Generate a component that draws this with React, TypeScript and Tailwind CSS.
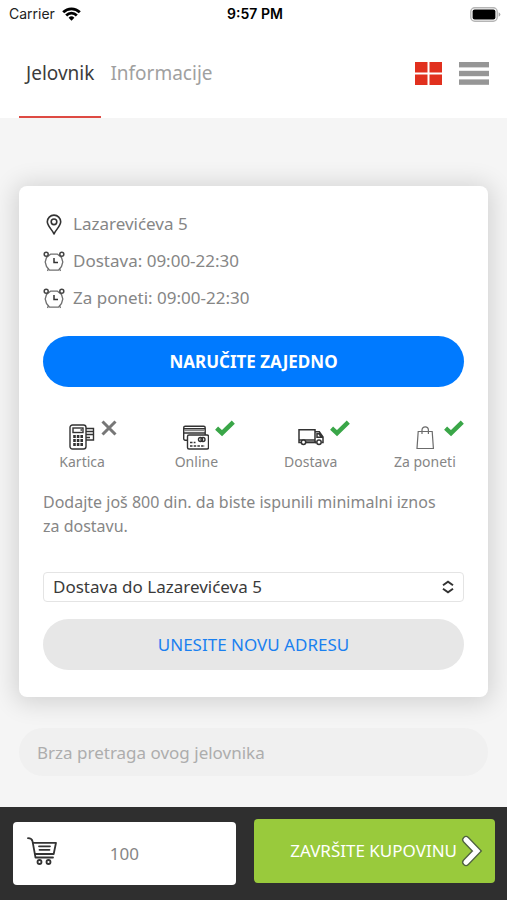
import { useState } from "react";
import type { ReactNode } from "react";

interface Option {
  label: string;
  available: boolean;
  icon: ReactNode;
}

function WifiIcon() {
  return (
    <svg width="19" height="14" viewBox="0 0 19 14" fill="none" stroke="#000" strokeWidth="2.8">
      <path d="M1.2 5.2a11.8 11.8 0 0 1 16.6 0" />
      <path d="M4.2 8.4a7.5 7.5 0 0 1 10.6 0" />
      <path d="M9.5 13.8 6.6 10.8a4.1 4.1 0 0 1 5.8 0z" fill="#000" stroke="none" />
    </svg>
  );
}

function BatteryIcon() {
  return (
    <svg width="31" height="15" viewBox="0 0 31 15">
      <rect x="0.8" y="0.8" width="26.4" height="13.4" rx="4" fill="#fff" stroke="#b5b5b5" strokeWidth="1.4" />
      <rect x="2.6" y="2.6" width="22.8" height="9.8" rx="2" fill="#000" />
      <path d="M28.6 5.2q1.8 1 1.8 2.3t-1.8 2.3z" fill="#a8a8a8" />
    </svg>
  );
}

function GridIcon() {
  return (
    <svg width="27" height="23" viewBox="0 0 27 23" fill="#e1301e">
      <rect width="12.5" height="10.5" />
      <rect x="14.5" width="12.5" height="10.5" />
      <rect y="12.5" width="12.5" height="10.5" />
      <rect x="14.5" y="12.5" width="12.5" height="10.5" />
    </svg>
  );
}

function ListIcon() {
  return (
    <svg width="30" height="23" viewBox="0 0 30 23" fill="#969696">
      <rect width="30" height="5.4" />
      <rect y="8.8" width="30" height="5.4" />
      <rect y="17.4" width="30" height="5.4" />
    </svg>
  );
}

function PinIcon() {
  return (
    <svg width="22" height="22" viewBox="0 0 22 22" fill="none" stroke="#333" strokeWidth="1.6">
      <path d="M11 21C9.5 17 4.3 13.1 4.3 8.800a6.700 6.700 0 0 1 13.400 0c0 4.300-5.200 8.200-6.700 12.200z" strokeLinejoin="round" />
      <circle cx="11" cy="8.800" r="2.800" />
    </svg>
  );
}

function ClockIcon() {
  return (
    <svg width="22" height="22" viewBox="0 0 22 22" fill="none" stroke="#707070" strokeWidth="1.300">
      <path d="M7.500 4.200h7l4 3.300 1.300 4.500-1.300 4.500-3 3.700h-9l-3-3.700L2.200 12l1.300-4.500z" strokeLinejoin="round" />
      <path d="M5.500 18.500 4.500 21M16.500 18.500l1 2.500" />
      <circle cx="3.200" cy="4.300" r="2" stroke="#444" strokeWidth="1.500" />
      <circle cx="18.800" cy="4.300" r="2" stroke="#444" strokeWidth="1.500" />
      <path d="M11 8v4.500h4" stroke="#333" strokeWidth="1.500" />
    </svg>
  );
}

function TerminalIcon() {
  return (
    <svg width="26" height="26" viewBox="0 0 26 26" fill="none" stroke="#333" strokeWidth="1.400">
      <path d="M17 4.500h7.500v11.500H17M17 7.500h7.500M17 10.500h7.500M17 13.500h4" />
      <rect x="1" y="1" width="16" height="24" rx="2.500" fill="#fff" />
      <rect x="4" y="4" width="10" height="4.500" />
      <path d="M11.500 6h1.500" />
      <path d="M4.200 12.500h9.800M4.200 16.500h9.800M4.200 20.500h9.800" strokeWidth="2.800" strokeDasharray="2.600 1" />
    </svg>
  );
}

function CardsIcon() {
  return (
    <svg width="26" height="26" viewBox="0 0 26 26" fill="none" stroke="#333" strokeWidth="1.400">
      <rect x="0.700" y="2.200" width="21.500" height="14" rx="1.500" fill="#fff" />
      <path d="M1 4.800h21M1 9h21" />
      <path d="M1 6.500h21" stroke="#888" />
      <rect x="4.500" y="11" width="21" height="14" rx="1.500" fill="#fff" />
      <circle cx="17.500" cy="15.500" r="2" />
      <circle cx="20" cy="15.500" r="2" />
      <path d="M7 18.500h5.500M7 22h15" strokeDasharray="2.500 1.200" />
    </svg>
  );
}

function TruckIcon() {
  return (
    <svg width="26" height="26" viewBox="0 0 26 26" fill="none" stroke="#333" strokeWidth="1.500">
      <path d="M3 18.500H1V5.800h16v12.700M1 16h16" />
      <path d="M17 7.800h4.300l3.700 5.200v5.500h-1.500M17 18.500h1.500M19 9.800h2l2.300 3.400H19z" />
      <path d="M8 18.300h10" strokeWidth="2" />
      <circle cx="5.500" cy="18.300" r="2.200" fill="#fff" />
      <circle cx="21" cy="18.300" r="2.200" fill="#fff" />
    </svg>
  );
}

function BagIcon() {
  return (
    <svg width="26" height="26" viewBox="0 0 26 26" fill="none" stroke="#6b6b6b" strokeWidth="1.200">
      <path d="M6.200 7.500h14l1.200 17H5z" />
      <path d="M10 10V6a3.200 3.200 0 0 1 6.400 0V10" />
    </svg>
  );
}

function CheckMark() {
  return (
    <svg width="20" height="17" viewBox="0 0 20 17" fill="none" stroke="#3aa648" strokeWidth="4.400">
      <path d="M1.600 8.200 7 13.200 18.300 2.200" />
    </svg>
  );
}

function CrossMark() {
  return (
    <svg width="16" height="16" viewBox="0 0 16 16" fill="none" stroke="#777" strokeWidth="3">
      <path d="M1.500 1.500l13 13M14.500 1.500l-13 13" />
    </svg>
  );
}

function CartIcon() {
  return (
    <svg width="30" height="28" viewBox="0 0 30 28" fill="none" stroke="#333" strokeWidth="1.800" strokeLinecap="round" strokeLinejoin="round">
      <path d="M1 1.200c2.500 0 4 1 4.500 3L8.500 20.500h17.500" />
      <path d="M5.800 5.800H29l-2.300 11.200H8" />
      <path d="M12 9.300h11M12.500 12.800h10" />
      <circle cx="12.500" cy="25" r="2" />
      <circle cx="21.500" cy="25" r="2" />
    </svg>
  );
}

function NextIcon() {
  return (
    <svg width="22" height="32" viewBox="0 0 22 32" fill="none" strokeLinecap="round">
      <path d="M5 4.800 15.800 16 5 27.200" stroke="#4f6240" strokeWidth="7.800" />
      <path d="M5 4.800 15.800 16 5 27.200" stroke="#fff" strokeWidth="5.200" />
    </svg>
  );
}

function SortIcon() {
  return (
    <svg width="12" height="14" viewBox="0 0 12 14" fill="none" stroke="#333" strokeWidth="2">
      <path d="M1 5.200 6 1.700 11 5.200M1 8.800l5 3.500 5-3.500" />
    </svg>
  );
}

const info = [
  { text: "Lazarevićeva 5", icon: <PinIcon /> },
  { text: "Dostava: 09:00-22:30", icon: <ClockIcon /> },
  { text: "Za poneti: 09:00-22:30", icon: <ClockIcon /> },
];

const options: Option[] = [
  { label: "Kartica", available: false, icon: <TerminalIcon /> },
  { label: "Online", available: true, icon: <CardsIcon /> },
  { label: "Dostava", available: true, icon: <TruckIcon /> },
  { label: "Za poneti", available: true, icon: <BagIcon /> },
];

export default function App() {
  const [search, setSearch] = useState("");

  return (
    <div className="flex min-h-screen flex-col bg-[#f5f5f5] font-['Noto_Sans',sans-serif] text-[17px] leading-6 text-[#868686]">
      <header className="bg-white">
        <div className="grid h-7 grid-cols-3 items-center pr-1.5 pl-[9px] font-['Inter',sans-serif] text-sm text-[#222]">
          <span className="flex items-center gap-[7px]">
            Carrier <WifiIcon />
          </span>
          <span className="text-center font-semibold text-black">9:57 PM</span>
          <span className="flex justify-end">
            <BatteryIcon />
          </span>
        </div>

        <div className="flex h-[90px] items-stretch justify-between pr-[18px] pl-[19px]">
          <nav className="flex text-[19px]">
            <a href="#jelovnik" className="flex items-center border-b-2 border-[#de4a43] px-[7px] pt-0.5 text-[#3c3c3c]">
              Jelovnik
            </a>
            <a href="#informacije" className="flex items-center px-[9px] text-[#a0a0a0]">
              Informacije
            </a>
          </nav>
          <div className="flex items-center gap-[17px]">
            <button aria-label="Mreža">
              <GridIcon />
            </button>
            <button aria-label="Lista">
              <ListIcon />
            </button>
          </div>
        </div>
      </header>

      <main className="flex-1 px-[19px] pt-[68px] pb-[31px]">
        <section className="rounded-lg bg-white px-6 pt-[19px] pb-[27px] shadow-[0_2px_24px_4px_rgba(0,0,0,0.14)]">
          <ul>
            {info.map(item => (
              <li key={item.text} className="flex h-[37px] items-center gap-2">
                {item.icon}
                {item.text}
              </li>
            ))}
          </ul>

          <button className="mt-5 h-[51px] w-full rounded-full bg-[#007aff] font-bold text-white">
            NARUČITE ZAJEDNO
          </button>

          <ul className="-mx-[18px] mt-[37px] grid grid-cols-4 text-sm">
            {options.map(o => (
              <li key={o.label} className="flex flex-col items-center">
                <span className="relative">
                  {o.icon}
                  <span className="absolute -top-1 left-8">
                    {o.available ? <CheckMark /> : <CrossMark />}
                  </span>
                </span>
                <span className="leading-6">{o.label}</span>
              </li>
            ))}
          </ul>

          <p className="mt-4 pr-4 text-base">
            Dodajte još 800 din. da biste ispunili minimalni iznos za dostavu.
          </p>

          <div className="relative mt-[34px]">
            <select
              aria-label="Adresa dostave"
              className="block h-[30px] w-full appearance-none rounded border border-[#e4e4e4] bg-white px-[9px] text-[#3a3a3a]"
            >
              <option>Dostava do Lazarevićeva 5</option>
            </select>
            <span className="pointer-events-none absolute inset-y-0 right-2.5 flex items-center">
              <SortIcon />
            </span>
          </div>

          <button className="mt-[17px] h-[51px] w-full rounded-full bg-[#e7e7e7] text-[#1a80f0]">
            UNESITE NOVU ADRESU
          </button>
        </section>

        <input
          type="search"
          aria-label="Brza pretraga ovog jelovnika"
          placeholder="Brza pretraga ovog jelovnika"
          value={search}
          onChange={e => setSearch(e.target.value)}
          className="mt-[31px] block h-12 w-full rounded-full bg-[#f0f0f0] px-[18px] placeholder:text-[#adadad]"
        />
      </main>

      <footer className="grid grid-cols-[12fr_13fr] items-end gap-[18px] bg-[#2f2f2f] pt-3 pr-3 pb-[15px] pl-[13px]">
        <div className="grid h-[63px] grid-cols-[30px_1fr_30px] items-center rounded bg-white px-3.5">
          <span className="pb-1.5">
            <CartIcon />
          </span>
          <span className="text-center">100</span>
        </div>
        <button className="mb-0.5 flex h-16 items-center justify-end gap-1 rounded bg-[#99ca3c] pr-3 whitespace-nowrap text-white">
          ZAVRŠITE KUPOVINU
          <NextIcon />
        </button>
      </footer>
    </div>
  );
}
